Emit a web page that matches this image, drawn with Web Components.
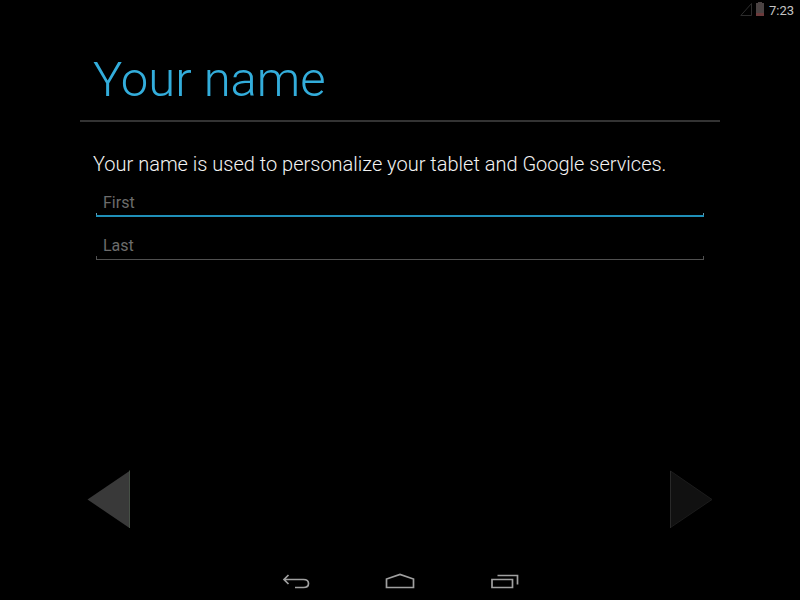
<!DOCTYPE html>
<html lang="en">
<head>
<meta charset="utf-8">
<meta name="viewport" content="width=device-width, initial-scale=1">
<title>Your name</title>
<style>
    html, body {
        margin: 0;
        height: 100%;
        background: #000;
    }

    body {
        font-family: Roboto, "Noto Sans", sans-serif;
        color: #f3f3f3;
    }
</style>
</head>
<body>

<tablet-screen>
    <status-bar slot="status" time="7:23"></status-bar>
    <setup-page heading="Your name">
        <p>Your name is used to personalize your tablet and Google services.</p>
        <holo-field label="First" name="first" active></holo-field>
        <holo-field label="Last" name="last"></holo-field>
    </setup-page>
    <wizard-nav slot="wizard"></wizard-nav>
    <system-bar slot="system"></system-bar>
</tablet-screen>

<script>
// whole screen: status on top, page in the middle, buttons below
class TabletScreen extends HTMLElement {

    constructor() {
        super();
        this.attachShadow({ mode: 'open' })
    }

    connectedCallback() {
        this.shadowRoot.innerHTML = `
        <style>
        :host {
            display: flex;
            flex-direction: column;
            min-height: 100vh;
        }

        main {
            flex: 1;
            display: flex;
            flex-direction: column;
            justify-content: space-between;
            margin: 0 10%;
        }
        </style>

        <slot name="status"></slot>
        <main>
            <slot></slot>
            <slot name="wizard"></slot>
        </main>
        <slot name="system"></slot>
        `
    }
}

customElements.define('tablet-screen', TabletScreen);


class StatusBar extends HTMLElement {

    constructor() {
        super();
        this.attachShadow({ mode: 'open' })
    }

    connectedCallback() {
        this.shadowRoot.innerHTML = `
        <style>
        :host {
            display: flex;
            justify-content: flex-end;
            align-items: center;
            height: 20px;
            padding-right: 6px;
            font-size: 13px;
            color: #c4c4c4;
        }

        .signal {
            margin-right: 4px;
        }

        .battery {
            margin-right: 5px;
        }
        </style>

        <svg class="signal" width="12" height="16" viewBox="0 0 12 16" aria-hidden="true">
            <path d="M11.500 1.500V13.500H.8Z" fill="none" stroke="#2c2c2c"/>
        </svg>
        <svg class="battery" width="8" height="16" viewBox="0 0 8 16" aria-hidden="true">
            <path d="M2 0h4v1H8v13H0V1h2Z" fill="#4b4343"/>
            <path d="M0 11h8v3H0Z" fill="#6b3a3b"/>
        </svg>
        <time>${this.getAttribute('time')}</time>
        `
    }
}

customElements.define('status-bar', StatusBar);


class SetupPage extends HTMLElement {

    constructor() {
        super();
        this.attachShadow({ mode: 'open' })
    }

    connectedCallback() {
        this.shadowRoot.innerHTML = `
        <style>
        :host {
            display: block;
        }

        h1 {
            margin: 0;
            padding: 31px 13px 11px;
            border-bottom: 2px solid #333;
            font-size: 49px;
            line-height: 58px;
            font-weight: 300;
            color: #33addb;
        }

        .content {
            padding: 30px 16px 0 13px;
        }

        ::slotted(p) {
            margin: 0 0 11px;
            font-size: 20px;
            line-height: 24px;
            font-weight: 300;
        }

        ::slotted(holo-field) {
            margin: 0 0 13px 3px;
        }
        </style>

        <h1>${this.getAttribute('heading')}</h1>
        <div class="content"><slot></slot></div>
        `
    }
}

customElements.define('setup-page', SetupPage);


// text box with the bracket shaped underline
class HoloField extends HTMLElement {

    constructor() {
        super();
        this.attachShadow({ mode: 'open' })
    }

    connectedCallback() {
        const label = this.getAttribute('label')
        const name = this.getAttribute('name')

        this.shadowRoot.innerHTML = `
        <style>
        :host {
            --line: #505050;
            --tick: #505050;
            --size: 1px;
            display: block;
        }

        :host([active]) {
            --line: #1f8fb8;
            --tick: #5f9db5;
            --size: 2px;
        }

        input {
            display: block;
            box-sizing: border-box;
            width: 100%;
            height: 30px;
            margin: 0;
            padding: 1px 7px 0;
            border: none;
            border-radius: 0;
            outline: none;
            background:
                linear-gradient(var(--line), var(--line)) bottom / 100% var(--size) no-repeat,
                linear-gradient(var(--tick), var(--tick)) left bottom / 1px 4px no-repeat,
                linear-gradient(var(--tick), var(--tick)) right bottom / 1px 4px no-repeat;
            font: 400 16px Roboto, "Noto Sans", sans-serif;
            color: #f3f3f3;
        }

        input::placeholder {
            color: #6c6c6c;
            opacity: 1;
        }
        </style>

        <input type="text" name="${name}" placeholder="${label}" aria-label="${label}" autocomplete="off">
        `
    }
}

customElements.define('holo-field', HoloField);


class WizardNav extends HTMLElement {

    constructor() {
        super();
        this.attachShadow({ mode: 'open' })
    }

    connectedCallback() {
        this.shadowRoot.innerHTML = `
        <style>
        :host {
            display: flex;
            justify-content: space-between;
            padding: 0 7px 36px;
        }

        button {
            display: block;
            padding: 0;
            border: none;
            background: none;
        }

        svg {
            display: block;
        }
        </style>

        <button type="button" aria-label="Back">
            <svg width="44" height="58" viewBox="0 0 44 58">
                <path d="M42.500 1V58L.5 29.500Z" fill="#393939"/>
                <path d="M42.500 .5V58" stroke="#465046"/>
            </svg>
        </button>
        <button type="button" aria-label="Next" disabled>
            <svg width="44" height="58" viewBox="0 0 44 58">
                <path d="M1.500 1V57.500L43 29.500Z" fill="#111" stroke="#1c1c1c"/>
                <path d="M1.500 1V58" stroke="#292929"/>
            </svg>
        </button>
        `
    }
}

customElements.define('wizard-nav', WizardNav);


class SystemBar extends HTMLElement {

    constructor() {
        super();
        this.attachShadow({ mode: 'open' })
    }

    connectedCallback() {
        this.shadowRoot.innerHTML = `
        <style>
        :host {
            display: flex;
            justify-content: center;
            height: 36px;
        }

        button {
            display: flex;
            justify-content: center;
            align-items: center;
            width: 104px;
            padding: 0;
            border: none;
            background: none;
        }

        svg {
            fill: none;
            stroke: #a0a0a0;
            stroke-width: 1.7;
        }
        </style>

        <button type="button" aria-label="Back">
            <svg width="28" height="18" viewBox="0 0 28 18">
                <path d="M2 6.500H21.500Q26.500 6.500 26.500 10.500T21.500 14.500H13M6.500 2L2 6.500L6.500 11"/>
            </svg>
        </button>
        <button type="button" aria-label="Home">
            <svg width="30" height="18" viewBox="0 0 30 18">
                <path d="M1.500 14.500V6L15 1.500L28.500 6V14.500Z"/>
            </svg>
        </button>
        <button type="button" aria-label="Recent apps">
            <svg width="30" height="18" viewBox="0 0 30 18">
                <path d="M3 6.500H23.500V14.500H3ZM8.500 2.500H28.500V11.500"/>
            </svg>
        </button>
        `
    }
}

customElements.define('system-bar', SystemBar);
</script>
</body>
</html>
